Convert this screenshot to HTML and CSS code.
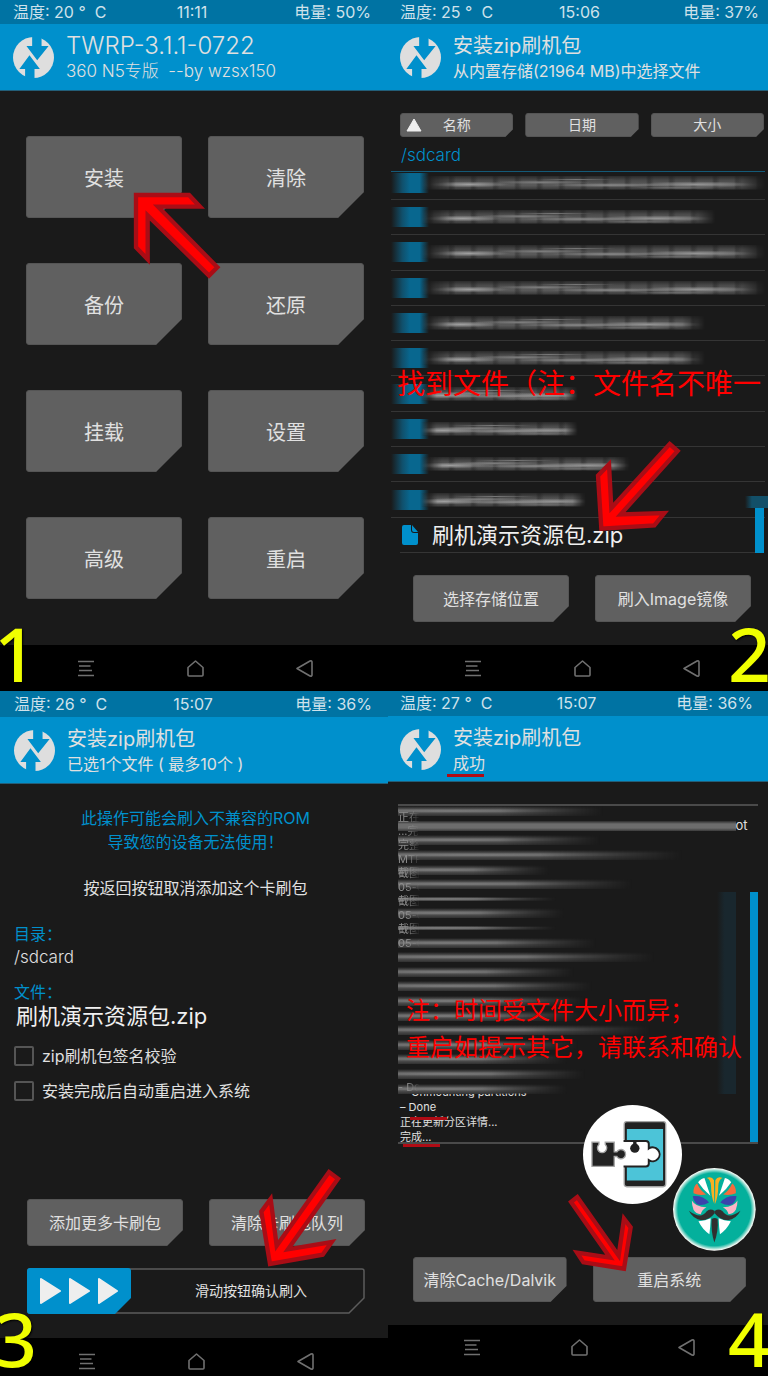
FILE: index.html
```html
<!DOCTYPE html>
<html lang="zh-CN">
<head>
<meta charset="utf-8">
<meta name="viewport" content="width=device-width, initial-scale=1">
<title>TWRP 刷机教程</title>
<link rel="stylesheet" href="styles.css">
</head>
<body>
<svg class="defs" aria-hidden="true">
  <symbol id="logo" viewBox="15 20 122 122">
    <circle cx="76" cy="81" r="61" fill="#dedede"/>
    <path fill="#0090cc" d="M72 18V47H55L87 89 121 47H100V18ZM51 144V115H34L64 74 95 115H79V144Z"/>
  </symbol>
  <symbol id="nav-menu" viewBox="0 0 17 17"><path d="M0 1.500H16M1 6H12.500M1 10.500H14M0 15.500H16" fill="none" stroke="#707070" stroke-width="1.600"/></symbol>
  <symbol id="nav-home" viewBox="0 0 17 17"><path d="M1 7.500 8.500 1 16 7.500V15Q16 16 15 16H2Q1 16 1 15Z" fill="none" stroke="#707070" stroke-width="1.600" stroke-linejoin="round"/></symbol>
  <symbol id="nav-back" viewBox="0 0 17 17"><path d="M1 8.500 14 1Q16 .5 16 2V15Q16 16.500 14 16Z" fill="none" stroke="#707070" stroke-width="1.600" stroke-linejoin="round"/></symbol>
</svg>
<main class="board">

  <section class="panel panel-home">
    <div class="status"><span>温度: 20 °&nbsp; C</span><time>11:11</time><span>电量: 50%</span></div>
    <header class="head">
      <svg class="logo"><use href="#logo"/></svg>
      <div><h2>TWRP-3.1.1-0722</h2><p>360 N5专版&nbsp; --by wzsx150</p></div>
    </header>
    <div class="content home-grid">
      <button class="btn big">安装</button><button class="btn big">清除</button>
      <button class="btn big">备份</button><button class="btn big">还原</button>
      <button class="btn big">挂载</button><button class="btn big">设置</button>
      <button class="btn big">高级</button><button class="btn big">重启</button>
    </div>
    <nav class="nav">
      <button aria-label="菜单"><svg><use href="#nav-menu"/></svg></button>
      <button aria-label="主页"><svg><use href="#nav-home"/></svg></button>
      <button aria-label="返回"><svg><use href="#nav-back"/></svg></button>
    </nav>
    <svg class="arrow arrow-1" viewBox="402 579 258 258"><path d="M408 585H567L600 620H474L652 802 627 827 443 646V778L408 742Z"/></svg>
    <b class="step step-left">1</b>
  </section>

  <section class="panel panel-files">
    <div class="status"><span>温度: 25 °&nbsp; C</span><time>15:06</time><span>电量: 37%</span></div>
    <header class="head">
      <svg class="logo"><use href="#logo"/></svg>
      <div><h2>安装zip刷机包</h2><p>从内置存储(21964 MB)中选择文件</p></div>
    </header>
    <div class="content">
      <div class="sorts">
        <button class="btn sort"><svg class="up" viewBox="0 0 16 14"><path d="M8 1 15 13H1Z" fill="#eee" stroke="#eee" stroke-linejoin="round"/></svg>名称</button>
        <button class="btn sort">日期</button>
        <button class="btn sort">大小</button>
      </div>
      <p class="path">/sdcard</p>
      <ul class="files">
        <li><i class="folder"></i><i class="smudge" style="width:92%"></i></li>
        <li><i class="folder"></i><i class="smudge" style="width:79%"></i></li>
        <li><i class="folder"></i><i class="smudge" style="width:92%"></i></li>
        <li><i class="folder"></i><i class="smudge" style="width:92%"></i></li>
        <li><i class="folder"></i><i class="smudge" style="width:76%"></i></li>
        <li><i class="folder"></i><i class="smudge" style="width:76%"></i></li>
        <li><i class="folder"></i><i class="smudge" style="width:42%"></i></li>
        <li><i class="folder"></i><i class="smudge" style="width:42%"></i></li>
        <li><i class="folder"></i><i class="smudge" style="width:56%"></i></li>
        <li><i class="folder"></i><i class="smudge" style="width:44%"></i></li>
        <li class="clear"><svg class="file" viewBox="0 0 16 20"><path d="M2 0H9V5Q9 8 12 8H16V18Q16 20 14 20H2Q0 20 0 18V2Q0 0 2 0ZM10 0 16 7H12Q10 7 10 5Z" fill="#0090cc"/></svg><span>刷机演示资源包.zip</span></li>
      </ul>
      <div class="pair">
        <button class="btn mid">选择存储位置</button>
        <button class="btn mid">刷入Image镜像</button>
      </div>
    </div>
    <nav class="nav">
      <button aria-label="菜单"><svg><use href="#nav-menu"/></svg></button>
      <button aria-label="主页"><svg><use href="#nav-home"/></svg></button>
      <button aria-label="返回"><svg><use href="#nav-back"/></svg></button>
    </nav>
    <p class="note note-find">找到文件（注：文件名不唯一</p>
    <svg class="arrow arrow-2" viewBox="624 454 255 270"><path d="M845 463 869 484 698 674 829 670 799 707 640 717 630 558 663 524 670 655Z"/></svg>
    <b class="step step-right">2</b>
  </section>

  <section class="panel panel-confirm">
    <div class="status"><span>温度: 26 °&nbsp; C</span><time>15:07</time><span>电量: 36%</span></div>
    <header class="head">
      <svg class="logo"><use href="#logo"/></svg>
      <div><h2>安装zip刷机包</h2><p>已选1个文件 ( 最多10个 )</p></div>
    </header>
    <div class="content">
      <p class="warn">此操作可能会刷入不兼容的ROM<br>导致您的设备无法使用！</p>
      <p class="hint">按返回按钮取消添加这个卡刷包</p>
      <dl class="facts">
        <dt>目录：</dt><dd>/sdcard</dd>
        <dt>文件：</dt><dd class="name">刷机演示资源包.zip</dd>
      </dl>
      <label class="check"><input type="checkbox">zip刷机包签名校验</label>
      <label class="check"><input type="checkbox">安装完成后自动重启进入系统</label>
      <div class="pair">
        <button class="btn mid">添加更多卡刷包</button>
        <button class="btn mid">清除卡刷包队列</button>
      </div>
      <button class="slider">
        <svg class="outline" viewBox="0 0 338 46" preserveAspectRatio="none"><path d="M3 1H335Q337 1 337 3V30L322 45H3Q1 45 1 43V3Q1 1 3 1Z" fill="none" stroke="#5c5c5c" stroke-width="1.500"/></svg>
        <span class="thumb"><svg viewBox="0 0 78 26"><path d="M1 1 20 13 1 25ZM30 1 49 13 30 25ZM59 1 77 13 59 25Z" fill="#eee" stroke="#eee" stroke-width="2" stroke-linejoin="round"/></svg></span>
        <span class="slide-text">滑动按钮确认刷入</span>
      </button>
    </div>
    <nav class="nav">
      <button aria-label="菜单"><svg><use href="#nav-menu"/></svg></button>
      <button aria-label="主页"><svg><use href="#nav-home"/></svg></button>
      <button aria-label="返回"><svg><use href="#nav-back"/></svg></button>
    </nav>
    <svg class="arrow arrow-3" viewBox="777 178 246 294"><path d="M987 187 1014 207 864 419 995 397 968 435 810 463 784 306 812 268 830 408Z"/></svg>
    <b class="step step-left">3</b>
  </section>

  <section class="panel panel-done">
    <div class="status"><span>温度: 27 °&nbsp; C</span><time>15:07</time><span>电量: 36%</span></div>
    <header class="head">
      <svg class="logo"><use href="#logo"/></svg>
      <div><h2>安装zip刷机包</h2><p>成功</p></div>
    </header>
    <div class="content">
      <div class="log">
        <div class="lines">
          <p>&nbsp;- Unmounting partitions</p>
          <p>– Done</p>
          <p>正在更新分区详情...</p>
          <p>完成...</p>
        </div>
        <div class="smears">
          <div><i class="smear" style="width:57%"></i></div>
          <div><i class="smear" style="width:94%"></i><span>ot</span></div>
          <div><i class="smear" style="width:56%"></i></div>
          <div><i class="smear" style="width:79%"></i></div>
          <div><i class="smear" style="width:42%"></i></div>
          <div><i class="smear" style="width:65%"></i></div>
          <div><i class="smear thin" style="width:44%"></i></div>
          <div><i class="smear" style="width:46%"></i></div>
          <div><i class="smear thin" style="width:44%"></i></div>
          <div><i class="smear" style="width:55%"></i></div>
          <div><i class="smear" style="width:71%"></i></div>
          <div><i class="smear" style="width:49%"></i></div>
          <div><i class="smear" style="width:54%"></i></div>
          <div><i class="smear" style="width:52%"></i></div>
          <div><i class="smear" style="width:51%"></i></div>
          <div><i class="smear" style="width:70%"></i></div>
          <div><i class="smear" style="width:50%"></i></div>
          <div><i class="smear" style="width:47%"></i></div>
          <div><i class="smear" style="width:52%"></i></div>
          <div><i class="smear" style="width:47%"></i></div>
        </div>
        <div class="ghosts">
          <p>正在</p><p>...完</p><p>完整</p><p>MTP</p><p>截图</p><p>05-0</p><p>截图</p><p>05-0</p><p>截图</p><p>05-0</p>
          <p class="late">- Do</p>
        </div>
      </div>
      <div class="pair">
        <button class="btn mid">清除Cache/Dalvik</button>
        <button class="btn mid">重启系统</button>
      </div>
    </div>
    <nav class="nav">
      <button aria-label="菜单"><svg><use href="#nav-menu"/></svg></button>
      <button aria-label="主页"><svg><use href="#nav-home"/></svg></button>
      <button aria-label="返回"><svg><use href="#nav-back"/></svg></button>
    </nav>
    <i class="mark mark-title"></i><i class="mark mark-log"></i><i class="mark mark-end"></i>
    <p class="note note-time">注：时间受文件大小而异；<br>重启如提示其它，请联系和确认</p>
    <svg class="badge badge-puzzle" viewBox="40 29 298 298">
      <circle cx="189" cy="178" r="149" fill="#fff"/>
      <rect x="164" y="79" width="125" height="196" rx="8" fill="#222" stroke="#a5a5a5" stroke-width="4"/>
      <path d="M172 101H281V256H172Z" fill="#4cc4d8"/>
      <path d="M158 137H229Q238 137 238 146V160A21 21 0 1 1 238 195V206Q238 214 229 214H158" fill="#fff" stroke="#222" stroke-width="6"/>
      <path d="M154 132H162V220H154Z" fill="#fff"/>
      <circle cx="196" cy="159" r="14" fill="#222"/><path d="M191 138H201V152H191Z" fill="#222"/>
      <path d="M67 141H88V148A14 14 0 1 0 107 148V141H134V170H142A14 14 0 1 1 142 184H134V214H67Z" fill="#222" stroke="#a5a5a5" stroke-width="4"/>
    </svg>
    <svg class="badge badge-mask" viewBox="309 219 251 251">
      <defs><radialGradient id="glow"><stop offset=".88" stop-color="#04b09c"/><stop offset=".98" stop-color="#e8f5ee"/><stop offset="1" stop-color="#fff"/></radialGradient>
      <g id="half">
        <path d="M411 249Q426 242 433 256L434 328Q424 305 424 272 422 252 411 249Z" fill="#fbb021"/>
        <path d="M385 262Q394 250 404 249L422 303Q400 285 385 262Z" fill="#fff"/>
        <path d="M371 286Q374 271 382 266 391 287 409 299 388 303 371 295Z" fill="#f76c3c"/>
        <path d="M369 304Q385 302 399 308 411 314 418 323 396 335 381 328 370 319 369 304Z" fill="#3a43ac"/>
        <path d="M366 317Q376 336 410 338 396 346 393 359 378 357 371 345 366 333 366 317Z" fill="#fbb6c6"/>
        <path d="M435 349Q421 340 411 350 394 376 357 348 369 373 396 377 420 376 435 356Z" fill="#303030"/>
        <path d="M386 380Q408 378 423 371 422 397 419 419 398 405 386 380Z" fill="#fff"/>
      </g></defs>
      <circle cx="434" cy="344" r="125" fill="url(#glow)"/>
      <use href="#half"/><use href="#half" transform="translate(870 0) scale(-1 1)"/>
      <path d="M426 373Q435 367 444 373 447 410 434 444 423 410 426 373Z" fill="#303030"/>
    </svg>
    <svg class="arrow arrow-4" viewBox="541 312 195 231"><path d="M569 321 550 336 667 503 568 488 587 517 709 536 729 412 709 386 693 497Z"/></svg>
    <b class="step step-right">4</b>
  </section>
</main>
</body>
</html>
```
FILE: styles.css
```css
* { box-sizing: border-box; margin: 0; padding: 0; }
body {
  background: #000;
  color: #e0e0e0;
  font: 400 16px/24px Inter, "Noto Sans CJK SC", sans-serif;
  overflow-x: hidden;
}
button { font: inherit; color: inherit; border: 0; background: none; }
.defs { display: none; }
.board {
  display: grid;
  grid-template-columns: 97fr 95fr;
  grid-template-rows: auto 1fr;
  min-height: 100vh;
}
.panel {
  position: relative;
  display: flex;
  flex-direction: column;
  min-width: 0;
  overflow: hidden;
  background: #1a1a1a;
  --left: 13px;
  --right: 17px;
  --inset-left: 26px;
  --inset-right: 24px;
}
.panel-files { --left: 12px; --right: 9px; --inset-left: 25px; --inset-right: 17px; }
.panel-confirm { --left: 14px; --right: 16px; --inset-left: 27px; --inset-right: 23px; }
.panel-done { --left: 12px; --right: 15px; --inset-left: 25px; --inset-right: 22px; }

/* status bar and title */
.status {
  display: grid;
  grid-template-columns: 1fr auto 1fr;
  height: 24px;
  padding: 0 var(--right) 0 var(--left);
  background: #0073a3;
  color: #cfe2eb;
  white-space: nowrap;
}
.status :last-child { text-align: right; }
.panel-confirm .status { height: 26px; line-height: 26px; }
.panel-done .status { height: 25px; }
.head {
  display: flex;
  gap: 12px;
  height: 67px;
  padding: 9px 0 0 var(--left);
  background: #0090cc;
  border-bottom: 1px solid #235e78;
  white-space: nowrap;
}
.panel-done .head { height: 66px; }
.logo { width: 41px; height: 41px; margin-top: 4px; }
.head h2 { font-size: 20px; font-weight: 400; line-height: 26px; }
.head p { line-height: 24px; }
.panel-home .head h2 { font-size: 24px; font-weight: 300; }
.panel-home .head p { font-size: 17px; font-weight: 300; }

.content { flex: 1; display: flex; flex-direction: column; }

/* buttons with a cut corner */
.btn {
  --cut: 16px;
  background: #606060;
  border: 1px solid #555;
  border-radius: 3px;
  clip-path: polygon(0 0, 100% 0, 100% calc(100% - var(--cut)), calc(100% - var(--cut)) 100%, 0 100%);
  white-space: nowrap;
}
.big { --cut: 26px; height: 82px; padding-top: 3px; font-size: 20px; }
.mid { height: 47px; }
.pair {
  display: grid;
  grid-template-columns: 1fr 1fr;
  gap: 26px;
  padding: 0 var(--inset-right) 0 var(--inset-left);
}
.content.home-grid {
  display: grid;
  grid-template-columns: 1fr 1fr;
  gap: 45px 26px;
  align-content: start;
  padding: 45px var(--inset-right) 45px var(--inset-left);
}

/* file chooser */
.sorts { display: flex; gap: 12px; padding: 22px 4px 0 12px; }
.sort { --cut: 8px; flex: 1; position: relative; height: 24px; font-size: 14px; line-height: 22px; }
.up { position: absolute; left: 5px; top: 4px; width: 16px; height: 14px; }
.path { height: 34px; padding: 6px 0 0 13px; font-size: 17px; font-weight: 300; color: #0090cc; }
.files {
  position: relative;
  display: grid;
  grid-template-rows: 28px repeat(10, 1fr);
  height: 382px;
  margin: 0 3px;
  border-top: 1px solid #145a78;
  list-style: none;
}
.files li { display: flex; align-items: center; border-bottom: 1px solid #353535; }
.files li:first-child { padding-bottom: 6px; }
.files::before, .files::after { content: ""; position: absolute; background: #0090cc; }
.files::after { right: 1px; bottom: 0; width: 9px; height: 45px; }
.files::before { right: -3px; bottom: 45px; width: 23px; height: 12px; background: linear-gradient(90deg, #1a1a1a, #124f68 30%); }
.folder {
  flex: none;
  width: 38px;
  height: 20px;
  margin-right: -8px;
  background: linear-gradient(90deg, #1a1a1a, #10506c 30%, #08678f 50% 75%, #1a1a1a);
}
.smudge {
  height: 14px;
  background:
    radial-gradient(40px 3px at 14% 60%, #a0a0a0, transparent),
    radial-gradient(50px 2px at 35% 45%, #808080, transparent),
    radial-gradient(60px 2px at 55% 65%, #8a8a8a, transparent),
    radial-gradient(60px 3px at 80% 60%, #959595, transparent),
    radial-gradient(40px 1px at 45% 25%, #777, transparent),
    radial-gradient(50px 1px at 75% 85%, #808080, transparent),
    repeating-linear-gradient(90deg, #1a1a1a00 0 5px, #1a1a1a55 7px 9px, #1a1a1a00 13px 22px),
    linear-gradient(#2a2a2a, #4a4a4a 30%, #5c5c5c 65%, #404040 90%, #222);
  mask: linear-gradient(90deg, transparent, #000 10% 92%, transparent);
}
.files .clear { margin: 0 10px 0 9px; padding-left: 2px; gap: 14px; font-size: 22px; color: #f0f0f0; white-space: nowrap; }
.file { width: 16px; height: 20px; }
.panel-files .pair { padding-top: 22px; padding-bottom: 23px; }

/* confirmation */
.panel-confirm .content { padding-top: 22px; }
.warn { color: #0090cc; text-align: center; padding-left: 3px; }
.hint { margin: 22px 0; text-align: center; padding-left: 3px; }
.facts { padding-left: 14px; }
.facts dt { color: #0090cc; }
.facts dd { height: 34px; font-size: 17px; font-weight: 300; line-height: 22px; }
.facts .name { padding-left: 2px; font-size: 22px; font-weight: 400; line-height: 25px; color: #f0f0f0; }
.check { display: flex; align-items: center; gap: 8px; height: 35px; padding-left: 14px; }
.check input { appearance: none; width: 20px; height: 20px; border: 2px solid #555; border-radius: 2px; }
.panel-confirm .pair { margin-top: auto; }
.slider { position: relative; display: flex; height: 46px; margin: 22px var(--inset-right) 24px var(--inset-left); }
.outline { position: absolute; inset: 0; width: 100%; height: 100%; }
.thumb {
  position: relative;
  display: grid;
  place-items: center;
  flex: none;
  width: 104px;
  height: 46px;
  border-radius: 3px;
  background: #0090cc;
  clip-path: polygon(0 0, 100% 0, 100% 30px, 88px 100%, 0 100%);
}
.thumb svg { width: 78px; height: 26px; }
.slide-text { flex: 1; align-self: center; padding-left: 6px; font-size: 14px; }

/* install log */
.panel-done .content { padding-top: 22px; }
.log {
  position: relative;
  display: grid;
  height: 340px;
  margin: 0 10px;
  border: solid #4a4a4a;
  border-width: 2px 0;
  font-size: 11px;
  line-height: 15px;
}
.log > * { grid-area: 1 / 1; }
.log::before, .log::after { content: ""; position: absolute; bottom: 0; }
.log::after { right: 0; width: 8px; height: 250px; background: #0090cc; }
.log::before { right: 22px; bottom: 48px; width: 19px; height: 202px; background: linear-gradient(90deg, #1a1a1a, #19272e 40%); }
.lines { align-self: end; margin-bottom: -3px; padding-left: 2px; }
.smears { display: flex; flex-direction: column; height: 292px; }
.smears div { flex: 1; display: flex; align-items: center; }
.smears span { margin: -4px 0 0 -1px; font-size: 13px; }
.smears div:last-child { background: linear-gradient(#1a1a1a 10px, transparent 10px); }
.smears .smear {
  height: 10px;
  margin-top: -4px;
  background:
    radial-gradient(70% 2px at 25% 50%, #808080, transparent),
    linear-gradient(#1a1a1a, #5a5a5a 35%, #4c4c4c 70%, #303030);
  mask: linear-gradient(90deg, #000 50%, transparent);
}
.smears div:nth-child(2) .smear { mask: none; background: linear-gradient(#2a2a2a, #6c6c6c 30% 70%, #3a3a3a); }
.smears .thin { height: 4px; }
.ghosts { padding-top: 4px; line-height: 14px; width: 22px; overflow: hidden; white-space: nowrap; color: #8c8c8c; mask: linear-gradient(90deg, #000 40%, transparent); }
.late { margin-top: 130px; }
.panel-done .pair { margin-top: auto; padding-bottom: 23px; }
.panel-done .mid { height: 45px; }

/* navigation */
.nav { display: flex; justify-content: center; align-items: center; gap: 92px; height: 46px; padding-left: 3px; background: #000; }
.panel-files .nav { padding-left: 8px; }
.panel-confirm .nav { height: 38px; padding-top: 8px; padding-left: 5px; }
.panel-done .nav { height: 51px; padding: 0 0 7px 2px; gap: 90px; }
.nav button { display: flex; }
.nav svg { width: 17px; height: 17px; }

/* annotations over the screens */
.arrow { position: absolute; overflow: visible; }
.arrow path { fill: #f00; stroke: #a90d16; stroke-width: 13; }
.arrow-1 { left: 134px; top: 193px; width: 86px; height: 86px; }
.arrow-2 { left: 208px; top: 441px; width: 85px; height: 90px; }
.arrow-3 { left: 259px; top: 478px; width: 82px; height: 98px; }
.arrow-4 { left: 180px; top: 503px; width: 65px; height: 77px; }
.note { position: absolute; color: #f00; white-space: nowrap; }
.note-find { left: 9px; top: 366px; font-size: 28px; line-height: 36px; }
.note-time { left: 18px; top: 301px; font-size: 24px; line-height: 37px; }
.step { position: absolute; bottom: 0; font: 500 75px/75px "Noto Sans", sans-serif; color: #f0ff00; text-shadow: 1px 1px 2px #000; }
.step-left { left: -6px; }
.step-right { right: -3px; }
.mark { position: absolute; width: 37px; height: 3px; background: #b00b14; }
.mark-title { left: 59px; top: 83px; }
.mark-log { left: 22px; top: 426px; }
.mark-end { left: 15px; top: 453px; }
.badge { position: absolute; }
.badge-puzzle { left: 195px; top: 414px; width: 99px; height: 99px; }
.badge-mask { left: 285px; top: 477px; width: 83px; height: 83px; }
```
